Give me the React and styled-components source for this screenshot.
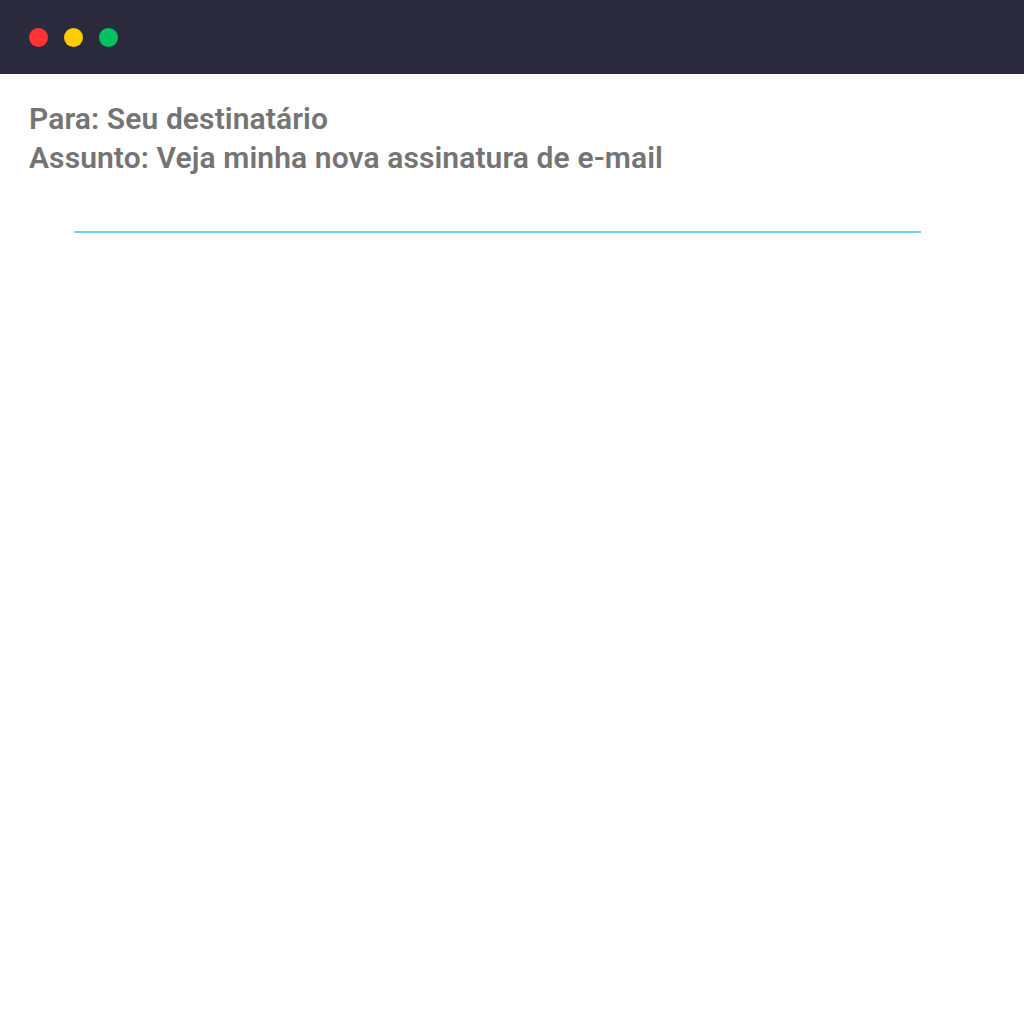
import React from "react";
import styled, { createGlobalStyle } from "styled-components";

const Global = createGlobalStyle`
  html, body { margin: 0; padding: 0; background: #ffffff; }
  body { font-family: Roboto, "Liberation Sans", sans-serif; }
`;

const Page = styled.div`
  width: 1024px;
  height: 1024px;
  background: #ffffff;
  display: flex;
  flex-direction: column;
`;

const TitleBar = styled.div`
  height: 74px;
  background: #2b2a3d;
  display: flex;
  align-items: center;
  gap: 16px;
  padding-left: 29px;
  box-sizing: border-box;
`;

const Dot = styled.span`
  width: 19px;
  height: 19px;
  border-radius: 50%;
  background: ${(p) => p.$color};
  display: block;
`;

const Headers = styled.div`
  padding: 25px 0 0 29px;
  display: flex;
  flex-direction: column;
`;

const HeaderLine = styled.div`
  font-family: Roboto, "Liberation Sans", sans-serif;
  font-weight: 600;
  font-size: 30px;
  line-height: 39px;
  color: #747474;
  letter-spacing: 0.1px;
`;

const Divider = styled.div`
  margin: 54px 0 0 74px;
  width: 847px;
  height: 2px;
  background: #6ccff7;
`;

export default function App() {
  return (
    <Page>
      <Global />
      <TitleBar>
        <Dot $color="#ff3434" />
        <Dot $color="#ffcc00" />
        <Dot $color="#00c263" />
      </TitleBar>
      <Headers>
        <HeaderLine>Para: Seu destinatário</HeaderLine>
        <HeaderLine>Assunto: Veja minha nova assinatura de e-mail</HeaderLine>
      </Headers>
      <Divider />
    </Page>
  );
}
